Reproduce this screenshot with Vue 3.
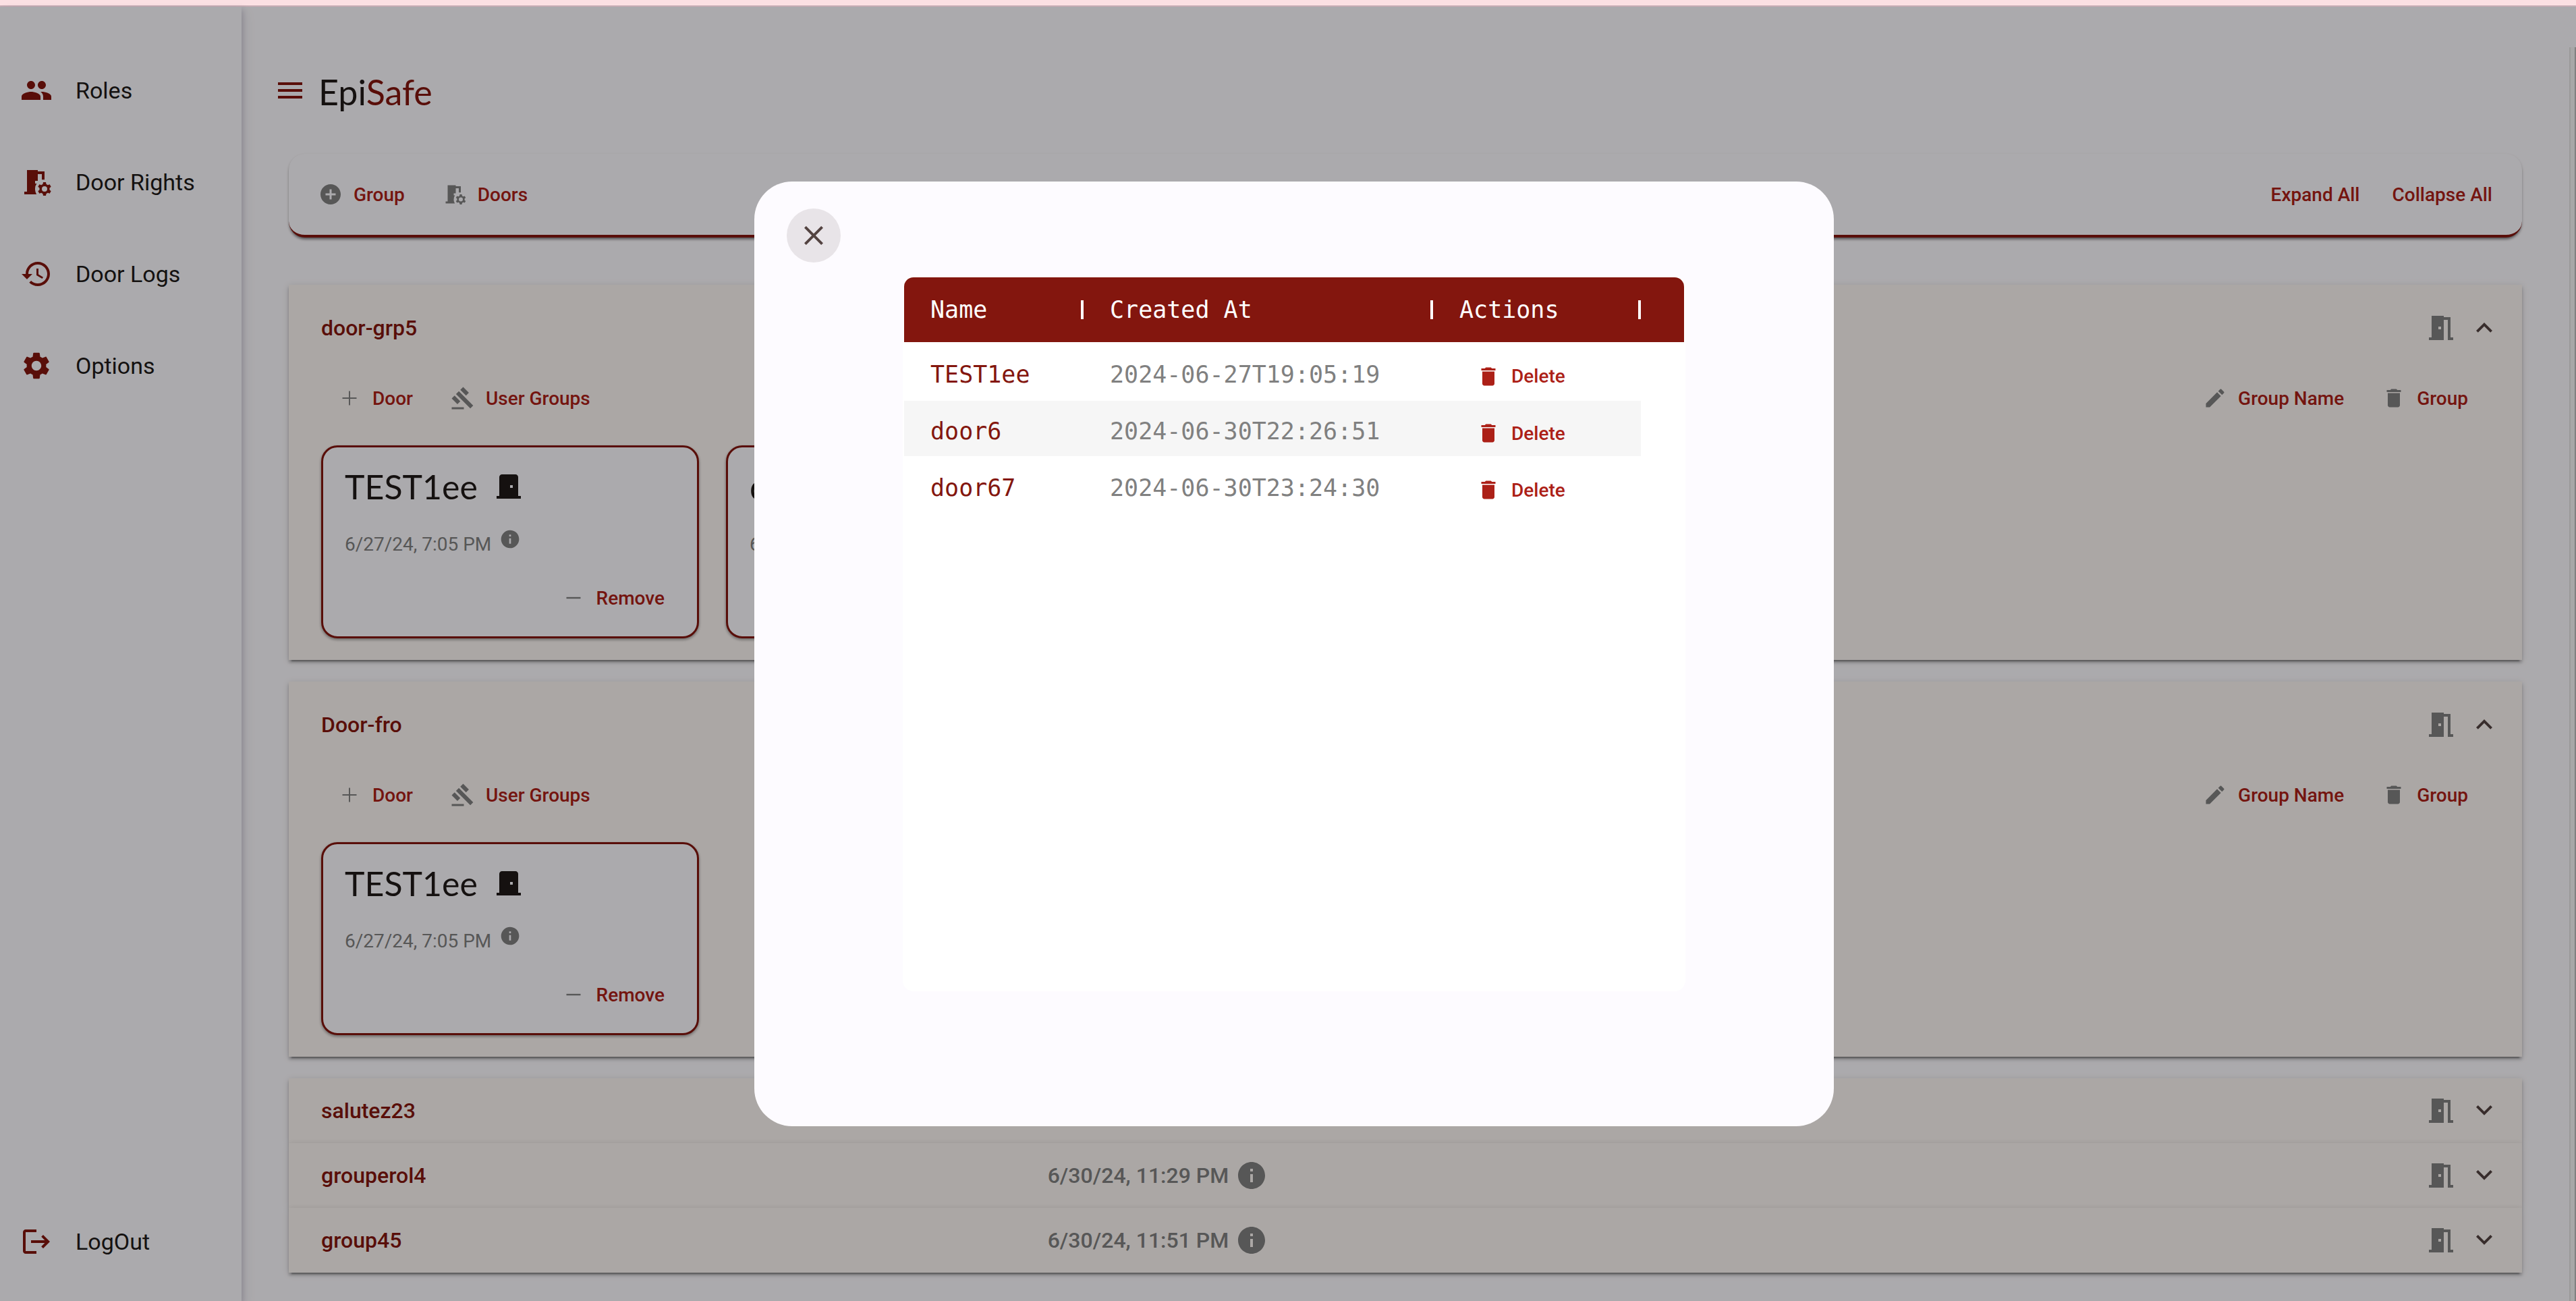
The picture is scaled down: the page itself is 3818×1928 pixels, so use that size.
<script setup>
import { ref } from 'vue'

const icons = {
  people: 'M16 11c1.66 0 2.99-1.34 2.99-3S17.66 5 16 5s-3 1.34-3 3 1.34 3 3 3zm-8 0c1.66 0 2.99-1.34 2.99-3S9.66 5 8 5 5 6.34 5 8s1.34 3 3 3zm0 2c-2.33 0-7 1.17-7 3.5V19h14v-2.5c0-2.33-4.67-3.5-7-3.5zm8 0c-.29 0-.62.02-.97.05 1.16.84 1.97 1.97 1.97 3.45V19h6v-2.5c0-2.33-4.67-3.5-7-3.5z',
  history: 'M13 3c-4.97 0-9 4.03-9 9H1l3.89 3.89.07.14L9 12H6c0-3.87 3.13-7 7-7s7 3.13 7 7-3.13 7-7 7c-1.93 0-3.68-.79-4.94-2.06l-1.42 1.42C8.27 19.99 10.51 21 13 21c4.97 0 9-4.03 9-9s-4.03-9-9-9zm-1 5v5l4.28 2.54.72-1.21-3.5-2.08V8H12z',
  settings: 'M19.14 12.94c.04-.3.06-.61.06-.94 0-.32-.02-.64-.07-.94l2.03-1.58c.18-.14.23-.41.12-.61l-1.92-3.32c-.12-.22-.37-.29-.59-.22l-2.39.96c-.5-.38-1.03-.7-1.62-.94l-.36-2.54c-.04-.24-.24-.41-.48-.41h-3.84c-.24 0-.43.17-.47.41l-.36 2.54c-.59.24-1.13.57-1.62.94l-2.39-.96c-.22-.08-.47 0-.59.22L2.74 8.87c-.12.21-.08.47.12.61l2.03 1.58c-.05.3-.09.63-.09.94s.02.64.07.94l-2.03 1.58c-.18.14-.23.41-.12.61l1.92 3.32c.12.22.37.29.59.22l2.39-.96c.5.38 1.03.7 1.62.94l.36 2.54c.05.24.24.41.48.41h3.84c.24 0 .44-.17.47-.41l.36-2.54c.59-.24 1.13-.56 1.62-.94l2.39.96c.22.08.47 0 .59-.22l1.92-3.32c.12-.22.07-.47-.12-.61l-2.01-1.58zM12 15.6c-1.98 0-3.6-1.62-3.6-3.6s1.62-3.6 3.6-3.6 3.6 1.62 3.6 3.6-1.62 3.6-3.6 3.6z',
  logout: 'M17 7l-1.41 1.41L18.17 11H8v2h10.17l-2.58 2.58L17 17l5-5zM4 5h8V3H4c-1.1 0-2 .9-2 2v14c0 1.1.9 2 2 2h8v-2H4V5z',
  menu: 'M3 18h18v-2H3v2zm0-5h18v-2H3v2zm0-7v2h18V6H3z',
  addCircle: 'M12 2C6.48 2 2 6.48 2 12s4.48 10 10 10 10-4.48 10-10S17.52 2 12 2zm5 11h-4v4h-2v-4H7v-2h4V7h2v4h4v2z',
  add: 'M19 12.65h-6.35V19h-1.3v-6.35H5v-1.3h6.35V5h1.3v6.35H19z',
  remove: 'M19 12.8H5v-1.6h14z',
  gavel: 'M1 21h12v2H1v-2zM5.24 8.07l2.83-2.83 14.14 14.14-2.83 2.83L5.24 8.07zM12.32 1l5.66 5.66-2.83 2.83-5.66-5.66L12.32 1zM3.83 9.48l5.66 5.66-2.83 2.83L1 12.31l2.83-2.83z',
  edit: 'M3 17.25V21h3.75L17.81 9.94l-3.75-3.75L3 17.25zM20.71 7.04c.39-.39.39-1.02 0-1.41l-2.34-2.34c-.39-.39-1.02-.39-1.41 0l-1.83 1.83 3.75 3.75 1.83-1.83z',
  trash: 'M6 19c0 1.1.9 2 2 2h8c1.1 0 2-.9 2-2V7H6v12zM19 4h-3.5l-1-1h-5l-1 1H5v2h14V4z',
  openDoor: 'M14 6v15H3v-2h2V3h9v1h5v15h2v2h-4V6h-3zm-4 5v2h2v-2h-2z',
  doorFront: 'M19 19V5c0-1.1-.9-2-2-2H7c-1.1 0-2 .9-2 2v14H3v2h18v-2h-2zm-4-6h-2v-2h2v2z',
  info: 'M12 2C6.48 2 2 6.48 2 12s4.48 10 10 10 10-4.48 10-10S17.52 2 12 2zm1 15h-2v-6h2v6zm0-8h-2V7h2v2z',
  close: 'M19 6.41L17.59 5 12 10.59 6.41 5 5 6.41 10.59 12 5 17.59 6.41 19 12 13.41 17.59 19 19 17.59 13.41 12z',
  down: 'M12 15.4 6 9.4 7.4 8l4.6 4.6L16.6 8 18 9.4z',
  up: 'M12 8 6 14l1.4 1.4 4.6-4.6 4.6 4.6L18 14z',
  doorGear: 'M5 3h8v1h5v6.1h-2V6h-3v5h-2v2h1.2A6.6 6.6 0 0 0 11 17c0 1.5.4 2.8 1.1 4H3v-2h2zM21.69 16.37l1.14-1-1-1.73-1.45.49q-.48-.405-1.08-.63L19 12h-2l-.3 1.49q-.6.225-1.08.63l-1.45-.49-1 1.73 1.14 1a3.5 3.5 0 0 0 0 1.26l-1.14 1 1 1.73 1.45-.49q.48.405 1.08.63L17 22h2l.3-1.49q.6-.225 1.08-.63l1.45.49 1-1.73-1.14-1a3.5 3.5 0 0 0 0-1.27M18 19a2 2 0 1 1 0-4 2 2 0 0 1 0 4',
}

const nav = [
  { label: 'Roles', icon: 'people' },
  { label: 'Door Rights', icon: 'doorGear' },
  { label: 'Door Logs', icon: 'history' },
  { label: 'Options', icon: 'settings' },
]

const groups = ref([
  {
    name: 'door-grp5',
    open: true,
    doors: [
      { name: 'TEST1ee', date: '6/27/24, 7:05 PM' },
      { name: 'door6', date: '6/30/24, 10:26 PM' },
    ],
  },
  { name: 'Door-fro', open: true, doors: [{ name: 'TEST1ee', date: '6/27/24, 7:05 PM' }] },
  { name: 'salutez23', open: false, doors: [] },
  { name: 'grouperol4', open: false, date: '6/30/24, 11:29 PM', doors: [] },
  { name: 'group45', open: false, date: '6/30/24, 11:51 PM', doors: [] },
])

const rows = ref([
  { name: 'TEST1ee', created: '2024-06-27T19:05:19' },
  { name: 'door6', created: '2024-06-30T22:26:51' },
  { name: 'door67', created: '2024-06-30T23:24:30' },
])

const dialogOpen = ref(true)

function setAll(open) {
  groups.value.forEach((g) => (g.open = open))
}
</script>

<template>
  <div class="app">
    <div class="top-strip"></div>
    <div class="shell">
      <nav class="sidebar">
        <a v-for="item in nav" :key="item.label" href="#" class="nav-item">
          <svg class="icon" viewBox="0 0 24 24"><path fill-rule="evenodd" :d="icons[item.icon]" /></svg>
          <span>{{ item.label }}</span>
        </a>
        <a href="#" class="nav-item logout">
          <svg class="icon" viewBox="0 0 24 24"><path :d="icons.logout" /></svg>
          <span>LogOut</span>
        </a>
      </nav>

      <main class="main">
        <header class="brand">
          <button class="menu" aria-label="Toggle menu">
            <svg class="icon" viewBox="0 0 24 24"><path :d="icons.menu" /></svg>
          </button>
          <h1 class="logo">Epi<span>Safe</span></h1>
        </header>

        <section class="toolbar">
          <div class="actions">
            <button class="btn"><svg class="icon-s" viewBox="0 0 24 24"><path :d="icons.addCircle" /></svg>Group</button>
            <button class="btn"><svg class="icon-s" viewBox="0 0 24 24"><path fill-rule="evenodd" :d="icons.doorGear" /></svg>Doors</button>
          </div>
          <div class="actions plain">
            <button class="btn" @click="setAll(true)">Expand All</button>
            <button class="btn" @click="setAll(false)">Collapse All</button>
          </div>
        </section>

        <section class="accordion">
          <article v-for="g in groups" :key="g.name" class="panel" :class="{ open: g.open }">
            <button class="panel-head" @click="g.open = !g.open">
              <span class="panel-title">{{ g.name }}</span>
              <span class="panel-desc">
                <span class="stamp">
                  <template v-if="g.date">
                    {{ g.date }}
                    <svg class="icon" viewBox="0 0 24 24"><path :d="icons.info" /></svg>
                  </template>
                </span>
                <svg class="icon" viewBox="0 0 24 24"><path fill-rule="evenodd" :d="icons.openDoor" /></svg>
              </span>
              <svg class="icon chevron" viewBox="0 0 24 24"><path :d="g.open ? icons.up : icons.down" /></svg>
            </button>
            <div v-if="g.open" class="panel-body">
              <div class="panel-actions">
                <div class="actions">
                  <button class="btn"><svg class="icon-s" viewBox="0 0 24 24"><path :d="icons.add" /></svg>Door</button>
                  <button class="btn"><svg class="icon-s" viewBox="0 0 24 24"><path :d="icons.gavel" /></svg>User Groups</button>
                </div>
                <div class="actions">
                  <button class="btn"><svg class="icon-s" viewBox="0 0 24 24"><path :d="icons.edit" /></svg>Group Name</button>
                  <button class="btn"><svg class="icon-s" viewBox="0 0 24 24"><path :d="icons.trash" /></svg>Group</button>
                </div>
              </div>
              <div class="cards">
                <div v-for="d in g.doors" :key="d.name" class="card">
                  <h2 class="card-title">
                    {{ d.name }}
                    <svg class="icon" viewBox="0 0 24 24"><path fill-rule="evenodd" :d="icons.doorFront" /></svg>
                  </h2>
                  <p class="card-date">
                    <span>{{ d.date }}</span>
                    <svg class="icon-xs" viewBox="0 0 24 24"><path :d="icons.info" /></svg>
                  </p>
                  <div class="card-actions">
                    <button class="btn"><svg class="icon-s" viewBox="0 0 24 24"><path :d="icons.remove" /></svg>Remove</button>
                  </div>
                </div>
              </div>
            </div>
          </article>
        </section>
      </main>
      <div class="scroll-track"></div>
    </div>

    <div v-if="dialogOpen" class="backdrop">
      <div class="dialog" role="dialog" aria-modal="true" aria-label="Doors">
        <button class="close" aria-label="Close" @click="dialogOpen = false">
          <svg class="icon" viewBox="0 0 24 24"><path :d="icons.close" /></svg>
        </button>
        <div class="grid-box">
          <table class="grid">
            <colgroup><col class="c-name" /><col class="c-date" /><col class="c-act" /><col /></colgroup>
            <thead>
              <tr>
                <th><span>Name</span></th>
                <th><span>Created At</span></th>
                <th><span>Actions</span></th>
                <td></td>
              </tr>
            </thead>
            <tbody>
              <tr v-for="r in rows" :key="r.name">
                <td class="name">{{ r.name }}</td>
                <td>{{ r.created }}</td>
                <td class="act">
                  <button class="btn danger"><svg class="icon-s" viewBox="0 0 24 24"><path :d="icons.trash" /></svg>Delete</button>
                </td>
                <td class="rest"></td>
              </tr>
            </tbody>
          </table>
        </div>
      </div>
    </div>
  </div>
</template>

<style>
body {
  background: #fdfbff;
}
</style>

<style scoped>
.app {
  position: relative;
  display: flex;
  flex-direction: column;
  height: 100vh;
  overflow: hidden;
  font-family: Roboto, sans-serif;
  color: #201a19;
  background: #fdfbff;
}
.app * {
  box-sizing: border-box;
}
button {
  border: 0;
  padding: 0;
  background: none;
  font-family: Roboto, sans-serif;
  cursor: pointer;
}
svg {
  flex: none;
  display: block;
  fill: currentColor;
}
.icon { width: 48px; height: 48px; }
.icon-s { width: 36px; height: 36px; color: #808080; }
.icon-xs { width: 32px; height: 32px; color: #808080; }

.top-strip {
  flex: none;
  height: 10px;
  background: #fbe0e3;
  border-bottom: 2px solid #c6acb4;
}
.shell {
  flex: 1;
  display: flex;
  min-height: 0;
}

.sidebar {
  flex: none;
  width: 358px;
  display: flex;
  flex-direction: column;
  gap: 88px;
  padding: 100px 0 64px 30px;
  box-shadow: 2px 4px 8px rgba(60, 50, 90, 0.2), 6px 8px 16px rgba(60, 50, 90, 0.08);
}
.nav-item {
  display: flex;
  align-items: center;
  gap: 34px;
  height: 48px;
  font-size: 34px;
  color: #201a19;
  text-decoration: none;
}
.nav-item .icon { color: #83160e; }
.logout { margin-top: auto; }

.main {
  flex: 1;
  min-width: 0;
  padding: 0 70px;
}
.brand {
  display: flex;
  align-items: flex-start;
  gap: 18px;
  height: 218px;
  margin-left: -22px;
  padding-top: 94px;
}
.menu {
  margin-top: 6px;
  color: #83160e;
}
.logo {
  margin: 0;
  font-family: Lato, sans-serif;
  font-size: 52px;
  line-height: 64px;
  font-weight: 400;
}
.logo span { color: #83160e; }

.toolbar {
  display: flex;
  justify-content: space-between;
  align-items: center;
  height: 124px;
  padding: 0 44px;
  border-bottom: 4px solid #83160e;
  border-radius: 24px;
  background: #fdfbff;
  box-shadow: 0 4px 4px -2px rgba(0, 0, 0, 0.5), 0 2px 4px rgba(0, 0, 0, 0.16);
}
.actions {
  display: flex;
  gap: 56px;
}
.plain { gap: 48px; }
.btn {
  display: flex;
  align-items: center;
  gap: 16px;
  height: 48px;
  font-size: 28px;
  font-weight: 500;
  color: #ac2017;
}

.accordion {
  padding-top: 70px;
}
.panel {
  background: #fdf7f4;
  box-shadow: 0 6px 2px -4px rgba(0, 0, 0, 0.3), 0 4px 4px rgba(0, 0, 0, 0.2), 0 2px 10px rgba(0, 0, 0, 0.14);
}
.panel.open { margin-bottom: 32px; }
.panel-head {
  display: flex;
  align-items: center;
  width: 100%;
  height: 96px;
  padding: 0 32px 0 48px;
  font-size: 32px;
  font-weight: 500;
  text-align: left;
}
.open .panel-head { height: 128px; }
.panel-title {
  flex: 1 1 0;
  margin-right: 32px;
  color: #83160e;
}
.panel-desc {
  flex: 2 1 0;
  display: flex;
  justify-content: space-between;
  align-items: center;
  margin-right: 16px;
  color: #808080;
}
.stamp {
  display: flex;
  align-items: center;
  gap: 10px;
}
.chevron { color: #534341; }

.panel-body { padding: 16px 48px 32px; }
.panel-actions {
  display: flex;
  justify-content: space-between;
  padding: 0 32px 0 24px;
}
.cards {
  display: flex;
  gap: 40px;
  margin-top: 46px;
}
.card {
  width: 560px;
  height: 286px;
  padding: 26px 48px 0 32px;
  border: 3px solid #83160e;
  border-radius: 24px;
  background: #fdfbff;
  box-shadow: 0 2px 4px rgba(0, 0, 0, 0.4);
}
.card-title {
  display: flex;
  align-items: center;
  gap: 22px;
  height: 64px;
  margin: 0;
  font-family: Lato, sans-serif;
  font-size: 50px;
  font-weight: 400;
}
.card-date {
  display: flex;
  align-items: flex-start;
  gap: 12px;
  height: 40px;
  margin: 30px 0 0;
  font-size: 28px;
  line-height: 48px;
  color: #808080;
}
.card-actions {
  display: flex;
  justify-content: flex-end;
  margin-top: 39px;
}

.scroll-track {
  flex: none;
  width: 10px;
  margin-top: 60px;
  border-left: 2px solid #e4e4e4;
  border-right: 2px solid #bdbdbd;
  background: #f6f6f6;
}

.backdrop {
  position: absolute;
  inset: 10px 0 0;
  display: flex;
  align-items: center;
  justify-content: center;
  padding-left: 18px;
  background: rgba(0, 0, 0, 0.32);
}
.dialog {
  width: 1600px;
  padding: 40px 48px 200px;
  border-radius: 56px;
  background: #fdfbff;
}
.close {
  display: flex;
  align-items: center;
  justify-content: center;
  width: 80px;
  height: 80px;
  border-radius: 50%;
  background: #e8e4e8;
  color: #534341;
}
.grid-box {
  height: 1060px;
  margin: 20px 172px 0;
  border: 2px solid #fff;
  border-radius: 16px;
  background: #fff;
  overflow: hidden;
}
.grid {
  width: 100%;
  table-layout: fixed;
  border-collapse: collapse;
  font-family: "DejaVu Sans Mono", monospace;
  font-size: 35px;
  color: #808080;
}
.c-name { width: 266px; }
.c-date { width: 518px; }
.c-act { width: 308px; }
.grid thead tr {
  height: 98px;
  background: linear-gradient(#83160e 96px, #fff 96px);
}
.grid th {
  padding: 0 0 2px 39px;
  font-weight: 400;
  text-align: left;
  color: #fff;
}
.grid th span {
  display: block;
  line-height: 28px;
  border-right: 4px solid #fff;
}
.grid tbody tr { height: 84px; }
.grid tbody td {
  padding: 8px 0 0 39px;
  border-bottom: 2px solid #fff;
}
.grid tbody tr:nth-child(even) td:not(.rest) { background: #f6f6f6; }
.grid .name { color: #83160e; }
.grid tbody .act { padding: 14px 0 0 64px; }
.danger .icon-s { color: #ac2017; }
</style>
